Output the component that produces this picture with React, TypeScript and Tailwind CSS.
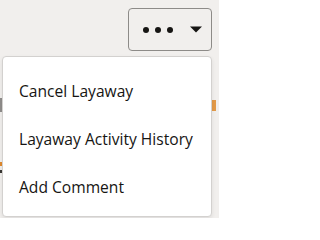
import React from "react";

export default function App() {
  const items = ["Cancel Layaway", "Layaway Activity History", "Add Comment"];
  return (
    <div
      className="relative w-[219px] h-[218px] overflow-hidden bg-[#f1efed] text-[#161513]"
      style={{ fontFamily: '"Open Sans", "Noto Sans", sans-serif' }}
    >
      {/* background content peeking out from under the menu */}
      <div className="absolute left-0 top-[98px] w-[2px] h-[14px] bg-[#8f8d8b]" />
      <div className="absolute left-0 top-[162px] w-[2px] h-[4px] bg-[#e08a2e]" />
      <div className="absolute left-0 top-[170px] w-[2px] h-[3px] bg-[#3a3835]" />
      <div className="absolute left-[212px] top-[100px] w-[4px] h-[11px] bg-[#e39a48]" />

      <div className="flex justify-end pt-[8px] pr-[7px]">
        <button className="flex items-center w-[84px] h-[43px] rounded-[4px] border border-[#8d8b88] bg-[#f1efed] pl-[14px]">
          <span className="flex gap-[6px]">
            <span className="block w-[6px] h-[6px] rounded-full bg-[#161513]" />
            <span className="block w-[6px] h-[6px] rounded-full bg-[#161513]" />
            <span className="block w-[6px] h-[6px] rounded-full bg-[#161513]" />
          </span>
          <svg width="12" height="7" viewBox="0 0 12 7" className="ml-[17px]">
            <path d="M0 0.5 L12 0.5 L6 6.5 Z" fill="#161513" />
          </svg>
        </button>
      </div>

      <div className="absolute left-[2px] top-[56px] w-[210px] h-[161px] rounded-[4px] border border-[#d3d1cf] bg-white pt-[11px] pb-[5px] shadow-[0_2px_4px_rgba(0,0,0,0.08)]">
        {items.map((t) => (
          <div key={t} className="flex items-center h-[48px] pl-[16px] text-[15.6px] leading-none">
            {t}
          </div>
        ))}
      </div>
    </div>
  );
}
